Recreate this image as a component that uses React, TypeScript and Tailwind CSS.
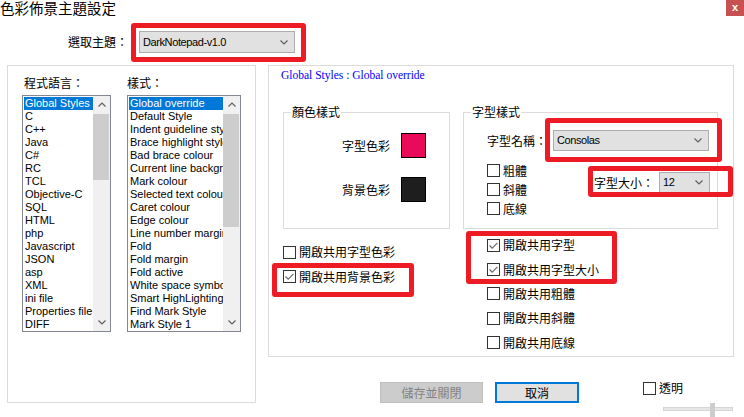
const cjk = "font-['Noto_Sans_CJK_TC',sans-serif]";
const latin = "font-['Liberation_Sans','Noto_Sans_CJK_TC',sans-serif]";

const languages = [
  "Global Styles", "C", "C++", "Java", "C#", "RC", "TCL", "Objective-C", "SQL",
  "HTML", "php", "Javascript", "JSON", "asp", "XML", "ini file", "Properties file", "DIFF",
];

const styles = [
  "Global override", "Default Style", "Indent guideline style", "Brace highlight style",
  "Bad brace colour", "Current line background colour", "Mark colour", "Selected text colour",
  "Caret colour", "Edge colour", "Line number margin", "Fold", "Fold margin", "Fold active",
  "White space symbol", "Smart HighLighting", "Find Mark Style", "Mark Style 1",
];

const Chevron = ({ up = false }: { up?: boolean }) => (
  <svg width="8" height="5" viewBox="0 0 8 5">
    <path d={up ? "M0.5 4.5 L4 1 L7.5 4.5" : "M0.5 0.5 L4 4 L7.5 0.5"} fill="none" stroke="#606060" strokeWidth="1.2" />
  </svg>
);

const Combo = ({ value, className }: { value: string; className: string }) => (
  <div className={`flex items-center justify-between border border-[#adadad] bg-[#e1e1e1] pl-[3px] pr-[6px] ${className}`}>
    <span className={`${latin} text-[11px] tracking-[-0.4px] leading-none`}>{value}</span>
    <Chevron />
  </div>
);

const Check = ({ label, checked = false, className = "" }: { label: string; checked?: boolean; className?: string }) => (
  <div className={`flex items-center ${className}`}>
    <div className="w-[13px] h-[13px] border border-[#333333] bg-white flex items-center justify-center">
      {checked && (
        <svg width="11" height="11" viewBox="0 0 11 11">
          <path d="M1.5 5.5 L4.2 8.2 L9.5 2.8" fill="none" stroke="#6a6a6a" strokeWidth="1.2" />
        </svg>
      )}
    </div>
    <span className={`${cjk} ml-[3px] text-[12px] leading-none`}>{label}</span>
  </div>
);

const ListBox = ({ items, width, thumb }: { items: string[]; width: string; thumb: string }) => (
  <div className={`flex h-[237px] border border-[#828790] bg-white ${width}`}>
    <div className="flex-1 overflow-hidden pt-[1px] pl-[1px]">
      {items.map((t, i) => (
        <div
          key={i}
          className={`${latin} h-[13px] leading-[13px] text-[11px] whitespace-nowrap pl-[1px] ${i === 0 ? "bg-[#0078d7] text-white" : "text-black"}`}
        >
          {t}
        </div>
      ))}
    </div>
    <div className="w-[17px] bg-[#f0f0f0] flex flex-col">
      <div className="h-[17px] flex items-center justify-center"><Chevron up /></div>
      <div className={`mt-[1px] mr-[1px] bg-[#cdcdcd] ${thumb}`} />
      <div className="flex-1" />
      <div className="h-[17px] flex items-center justify-center"><Chevron /></div>
    </div>
  </div>
);

const Group = ({ title, className, children }: { title: string; className: string; children: React.ReactNode }) => (
  <div className={`relative border border-[#dcdcdc] ${className}`}>
    <span className={`${cjk} absolute left-[7px] top-[-8px] bg-white px-[1px] text-[12px] leading-[14px]`}>{title}</span>
    {children}
  </div>
);

const Red = ({ className }: { className: string }) => (
  <div className={`absolute border-[5px] border-[#ed1c24] rounded-[3px] ${className}`} />
);

export default function App() {
  return (
    <div className="relative w-[744px] h-[417px] overflow-hidden bg-white text-black">
      <div className="flex h-[16px] items-start justify-between">
        <div className={`${cjk} text-[14.5px] leading-[16px]`}>色彩佈景主題設定</div>
        <div className={`${latin} w-[18px] h-[16px] bg-[#c75050] text-white text-[11px] font-bold leading-[15px] text-center`}>x</div>
      </div>

      <div className="flex items-center h-[22px] mt-[15px] pl-[68px]">
        <span className={`${cjk} w-[71px] text-[12px]`}>選取主題：</span>
        <Combo value="DarkNotepad-v1.0" className="w-[156px] h-[22px]" />
      </div>

      <div className="flex mt-[12px] pl-[7px]">
        <div className="w-[249px] h-[338px] border border-[#dcdcdc] flex pl-[14px] pt-[9px]">
          <div className="flex flex-col w-[89px]">
            <div className={`${cjk} h-[16px] leading-[16px] text-[12px] pl-[2px] mb-[4px]`}>程式語言：</div>
            <ListBox items={languages} width="w-[89px]" thumb="h-[66px]" />
          </div>
          <div className="flex flex-col w-[114px] ml-[16px]">
            <div className={`${cjk} h-[16px] leading-[16px] text-[12px] mb-[4px]`}>樣式：</div>
            <ListBox items={styles} width="w-[114px]" thumb="h-[113px]" />
          </div>
        </div>

        <div className="ml-[12px] w-[466px] flex flex-col">
          <div className="h-[292px] border border-[#dcdcdc] flex flex-col">
            <div className="pl-[12px] pt-[2px] h-[16px] text-[11.5px] leading-[14px] text-[#0000ff] font-['Liberation_Serif',serif]">
              Global Styles : Global override
            </div>

            <div className="flex mt-[30px] ml-[14px]">
              <Group title="顏色樣式" className="w-[167px] h-[117px]">
                <div className="flex flex-col items-end pr-[23px] pt-[20px]">
                  <div className="flex items-center">
                    <span className={`${cjk} text-[12px]`}>字型色彩</span>
                    <div className="ml-[11px] w-[25px] h-[25px] border border-black bg-[#ea0a5c]" />
                  </div>
                  <div className="flex items-center mt-[19px]">
                    <span className={`${cjk} text-[12px]`}>背景色彩</span>
                    <div className="ml-[11px] w-[25px] h-[25px] border border-black bg-[#1e1e1e]" />
                  </div>
                </div>
              </Group>

              <Group title="字型樣式" className="ml-[13px] w-[255px] h-[117px]">
                <div className="flex flex-col pl-[23px] pt-[17px]">
                  <div className="flex items-center h-[21px]">
                    <span className={`${cjk} w-[66px] text-[12px]`}>字型名稱：</span>
                    <Combo value="Consolas" className="w-[156px] h-[21px]" />
                  </div>
                  <div className="flex items-start">
                    <div className="flex flex-col w-[107px] mt-[10px]">
                      <Check label="粗體" className="h-[19px]" />
                      <Check label="斜體" className="h-[19px]" />
                      <Check label="底線" className="h-[19px]" />
                    </div>
                    <div className="flex items-center mt-[21px]">
                      <span className={`${cjk} w-[65px] text-[12px]`}>字型大小：</span>
                      <Combo value="12" className="w-[51px] h-[21px]" />
                    </div>
                  </div>
                </div>
              </Group>
            </div>

            <div className="flex">
              <div className="ml-[14px] w-[204px] mt-[11px] flex flex-col">
                <Check label="開啟共用字型色彩" className="h-[24.4px]" />
                <Check label="開啟共用背景色彩" checked className="h-[24.4px]" />
              </div>
              <div className="mt-[4px] flex flex-col">
                <Check label="開啟共用字型" checked className="h-[24.4px]" />
                <Check label="開啟共用字型大小" checked className="h-[24.4px]" />
                <Check label="開啟共用粗體" className="h-[24.4px]" />
                <Check label="開啟共用斜體" className="h-[24.4px]" />
                <Check label="開啟共用底線" className="h-[24.4px]" />
              </div>
            </div>
          </div>

          <div className="flex items-start mt-[25px] pl-[112px]">
            <div className={`${cjk} w-[103px] h-[21px] bg-[#cccccc] border border-[#bfbfbf] text-[#838383] text-[12px] leading-[19px] text-center`}>
              儲存並關閉
            </div>
            <div className={`${cjk} ml-[12px] w-[84px] h-[21px] bg-[#e1e1e1] border-2 border-[#0078d7] text-[12px] leading-[17px] text-center`}>
              取消
            </div>
            <Check label="透明" className="ml-[64px] h-[12px]" />
          </div>

          <div className="relative ml-[395px] w-[70px] h-[14px]">
            <div className="mt-[4px] h-[4px] bg-[#e7e7e7] border border-[#d6d6d6]" />
            <div className="absolute left-[47px] top-0 w-[5px] h-[14px] bg-[#cdcdcd]" />
          </div>
        </div>
      </div>

      <Red className="left-[131px] top-[23px] w-[175px] h-[39px]" />
      <Red className="left-[545px] top-[118px] w-[177px] h-[44px]" />
      <Red className="left-[588px] top-[166px] w-[145px] h-[31px]" />
      <Red className="left-[272px] top-[263px] w-[142px] h-[34px]" />
      <Red className="left-[466px] top-[231px] w-[151px] h-[53px]" />
    </div>
  );
}
